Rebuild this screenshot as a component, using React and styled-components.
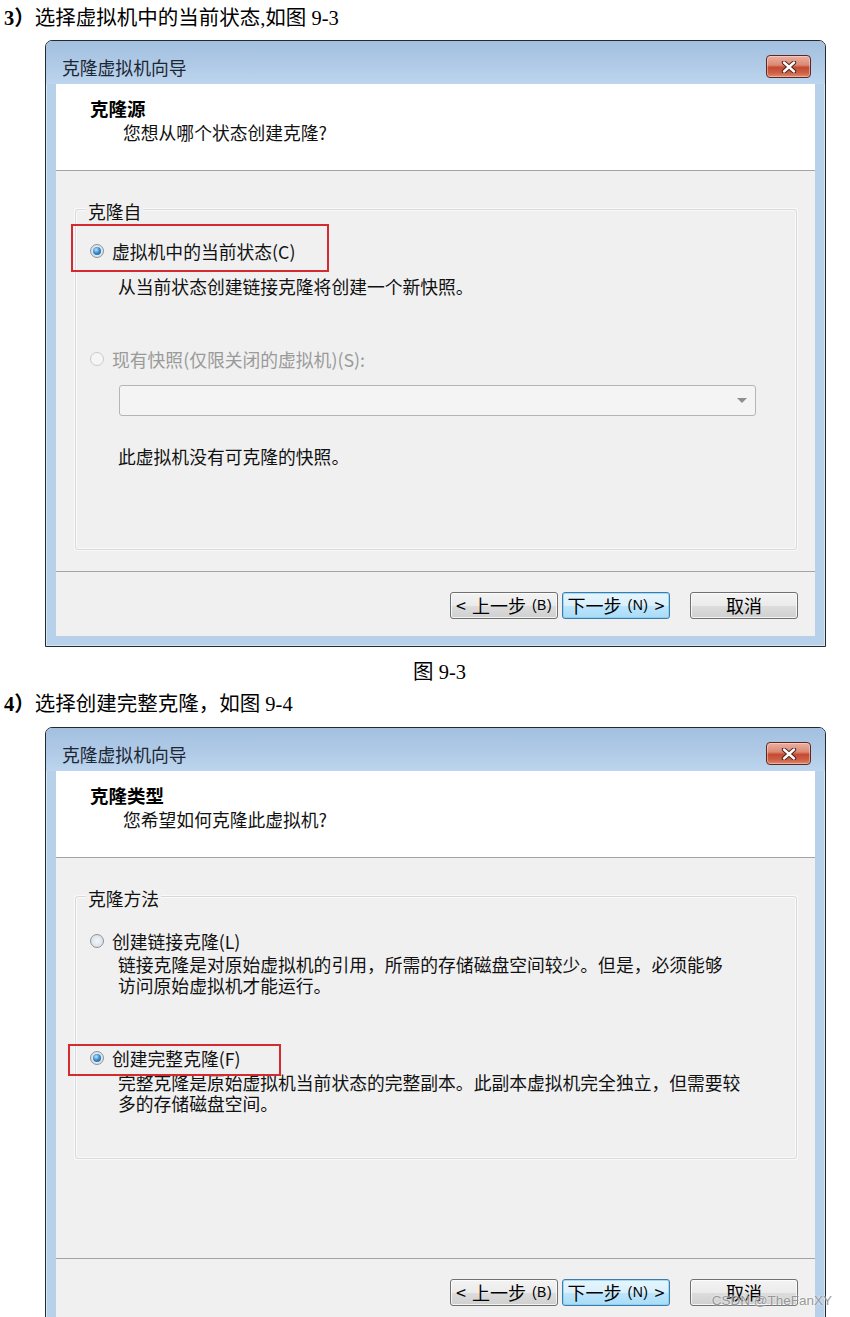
import React from "react";
import styled, { createGlobalStyle } from "styled-components";

const Global = createGlobalStyle`
  html, body { margin: 0; padding: 0; background: #fff; overflow: hidden; }
  body { font-family: "Liberation Serif", "Noto Sans CJK SC", serif; }
`;

const UI_FONT = `"Noto Sans CJK SC", "Noto Sans", sans-serif`;

const Page = styled.div`
  position: relative;
  width: 850px;
  height: 1317px;
  overflow: hidden;
  padding-top: 4px;
  box-sizing: border-box;
`;

const Caption = styled.p`
  margin: ${(p) => p.$mt || 0}px 0 0 4px;
  font-family: "Liberation Serif", "Noto Sans CJK SC", serif;
  font-size: 20.5px;
  line-height: 28px;
  color: #000;
  white-space: nowrap;
  b { font-weight: bold; }
`;

const FigCaption = styled.p`
  margin: 11px 0 0 0;
  padding-left: 29px;
  text-align: center;
  font-family: "Liberation Serif", "Noto Sans CJK SC", serif;
  font-size: 20.5px;
  line-height: 28px;
  color: #000;
`;

const Window = styled.div`
  margin: ${(p) => p.$mt}px 0 0 45px;
  width: 781px;
  height: 607px;
  flex: none;
  box-sizing: border-box;
  border: 1px solid #252a2f;
  border-radius: 7px 7px 0 0;
  background: #b7d1eb;
  display: flex;
  flex-direction: column;
  box-shadow: inset 0 0 0 1px rgba(255, 255, 255, 0.45);
`;

const TitleBar = styled.div`
  height: 43px;
  flex: none;
  display: flex;
  align-items: flex-start;
  justify-content: space-between;
  padding: 14px 14px 0 16px;
  box-sizing: border-box;
  border-radius: 6px 6px 0 0;
  background: linear-gradient(#a2c0e0 0%, #b1cbe7 60%, #bdd5ee 100%);
`;

const TitleText = styled.span`
  font-family: ${UI_FONT};
  font-size: 17.8px;
  line-height: 24px;
  color: #1b2733;
`;

const CloseButton = styled.div`
  width: 45px;
  height: 23px;
  box-sizing: border-box;
  border: 1px solid #5a2a22;
  border-radius: 4px;
  background: linear-gradient(#eab0a2 0%, #dd8a74 42%, #c44a31 55%, #cf5f45 80%, #dc8a70 100%);
  box-shadow: inset 0 0 0 1px rgba(255, 230, 220, 0.45);
  display: flex;
  align-items: center;
  justify-content: center;
`;

const Frame = styled.div`
  flex: 1;
  display: flex;
  padding: 0 10px 10px;
  min-height: 0;
`;

const Client = styled.div`
  flex: 1;
  display: flex;
  flex-direction: column;
  background: #f0f0f0;
  font-family: ${UI_FONT};
  font-size: 17.8px;
  line-height: 24px;
  color: #111;
`;

const Header = styled.div`
  flex: none;
  height: 87px;
  background: #fff;
  border-bottom: 1px solid #a3a3a3;
  padding-top: 12px;
  box-sizing: border-box;
`;

const HeaderTitle = styled.div`
  margin-left: 34px;
  font-weight: bold;
  font-size: 18.5px;
  line-height: 24px;
  color: #000;
`;

const HeaderSub = styled.div`
  margin-left: 67px;
  line-height: 24px;
`;

const Body = styled.div`
  flex: none;
  height: 401px;
  padding: 38px 18px 0 19px;
  box-sizing: border-box;
  border-bottom: 1px solid #a3a3a3;
`;

const Group = styled.div`
  position: relative;
  height: ${(p) => p.$height}px;
  box-sizing: border-box;
  border: 1px solid #d6d9dc;
  border-radius: 3px;
  box-shadow: inset 0 0 0 1px #fafafa, 0 0 0 1px #fafafa;
  display: flex;
  flex-direction: column;
`;

const GroupLabel = styled.span`
  position: absolute;
  top: -11px;
  left: 10px;
  padding: 0 2px;
  background: #f0f0f0;
  line-height: 24px;
`;

const Option = styled.div`
  position: relative;
  display: flex;
  align-items: center;
  gap: 8px;
  height: 22px;
  line-height: 22px;
  padding-left: 14px;
  margin-top: ${(p) => p.$mt}px;
  color: ${(p) => (p.$disabled ? "#9a9a9a" : "#111")};
`;

const Radio = styled.span`
  width: 14px;
  height: 14px;
  flex: none;
  border-radius: 50%;
  box-sizing: border-box;
  border: 1px solid ${(p) => (p.$disabled ? "#cacaca" : "#8c949c")};
  background: ${(p) =>
    p.$disabled
      ? "#f5f5f5"
      : "radial-gradient(circle at 50% 50%, #f4f7fa 0%, #dfe5ea 60%, #c3cbd3 100%)"};
  display: flex;
  align-items: center;
  justify-content: center;
  &::after {
    content: "";
    display: ${(p) => (p.$checked ? "block" : "none")};
    width: 8px;
    height: 8px;
    border-radius: 50%;
    background: radial-gradient(circle at 40% 35%, #bfe6ff 0%, #3a8fd0 45%, #134f8c 100%);
  }
`;

const RedBox = styled.span`
  position: absolute;
  top: ${(p) => p.$t}px;
  left: ${(p) => p.$l}px;
  width: ${(p) => p.$w}px;
  height: ${(p) => p.$h}px;
  box-sizing: border-box;
  border: 2px solid #d42b30;
  pointer-events: none;
`;

const Desc = styled.div`
  margin: ${(p) => p.$mt}px 0 0 42px;
  line-height: 21px;
  white-space: pre-line;
`;

const Combo = styled.div`
  margin: 15px 0 0 43px;
  width: 637px;
  height: 31px;
  flex: none;
  box-sizing: border-box;
  border: 1px solid #b5b5b5;
  border-radius: 3px;
  background: #f4f4f4;
  display: flex;
  align-items: center;
  justify-content: flex-end;
  padding-right: 8px;
`;

const ComboArrow = styled.span`
  width: 0;
  height: 0;
  border-left: 5px solid transparent;
  border-right: 5px solid transparent;
  border-top: 5px solid #8e8e8e;
`;

const Footer = styled.div`
  flex: 1;
  display: flex;
  justify-content: flex-end;
  align-items: flex-start;
  padding: 20px 17px 0 0;
`;

const Button = styled.div`
  width: 108px;
  height: 27px;
  margin-left: ${(p) => p.$ml || 0}px;
  box-sizing: border-box;
  border: 1px solid ${(p) => (p.$focus ? "#3d7bad" : "#707070")};
  border-radius: 3px;
  background: ${(p) =>
    p.$focus
      ? "linear-gradient(#e6f5fd 0%, #d9f0fc 50%, #bee6fd 51%, #a9dcf6 100%)"
      : "linear-gradient(#f3f3f3 0%, #ebebeb 50%, #dddddd 51%, #cfcfcf 100%)"};
  box-shadow: inset 0 0 0 1px ${(p) => (p.$focus ? "rgba(120,200,240,0.6)" : "rgba(255,255,255,0.75)")};
  display: flex;
  align-items: center;
  justify-content: center;
  gap: 6px;
  font-size: 18px;
  line-height: 25px;
  color: #000;
  white-space: nowrap;
`;

const Key = styled.span`
  font-size: 14px;
  font-family: "Liberation Sans", Arial, sans-serif;
  letter-spacing: 0.5px;
`;

const Watermark = styled.span`
  position: absolute;
  right: 18px;
  top: 1292px;
  font-family: "Liberation Sans", Arial, sans-serif;
  font-size: 13.5px;
  line-height: 18px;
  color: rgba(140, 140, 140, 0.9);
  text-shadow: 0 0 2px #fff;
`;

function CloseIcon() {
  return (
    <svg width="16" height="12" viewBox="0 0 16 12">
      <path d="M3 1.5 L13 10.5 M13 1.5 L3 10.5" stroke="#4a2019" strokeWidth="4.4" strokeLinecap="round" />
      <path d="M3 1.5 L13 10.5 M13 1.5 L3 10.5" stroke="#ffffff" strokeWidth="2.4" strokeLinecap="round" />
    </svg>
  );
}

function Wizard({ mt, title, subtitle, groupLabel, groupHeight, children }) {
  return (
    <Window $mt={mt}>
      <TitleBar>
        <TitleText>克隆虚拟机向导</TitleText>
        <CloseButton>
          <CloseIcon />
        </CloseButton>
      </TitleBar>
      <Frame>
        <Client>
          <Header>
            <HeaderTitle>{title}</HeaderTitle>
            <HeaderSub>{subtitle}</HeaderSub>
          </Header>
          <Body>
            <Group $height={groupHeight}>
              <GroupLabel>{groupLabel}</GroupLabel>
              {children}
            </Group>
          </Body>
          <Footer>
            <Button>
              <span>&lt;</span>
              <span>上一步</span>
              <Key>(B)</Key>
            </Button>
            <Button $focus $ml={4}>
              <span>下一步</span>
              <Key>(N)</Key>
              <span>&gt;</span>
            </Button>
            <Button $ml={20}>取消</Button>
          </Footer>
        </Client>
      </Frame>
    </Window>
  );
}

export default function App() {
  return (
    <Page>
      <Global />
      <Caption>
        <b>3）</b>选择虚拟机中的当前状态,如图 9-3
      </Caption>
      <Wizard
        mt={8}
        title="克隆源"
        subtitle="您想从哪个状态创建克隆?"
        groupLabel="克隆自"
        groupHeight={341}
      >
        <Option $mt={30}>
          <Radio $checked />
          <span>虚拟机中的当前状态(C)</span>
          <RedBox $t={-16} $l={-5} $w={258} $h={48} />
        </Option>
        <Desc $mt={14}>从当前状态创建链接克隆将创建一个新快照。</Desc>
        <Option $mt={51} $disabled>
          <Radio $disabled />
          <span>现有快照(仅限关闭的虚拟机)(S):</span>
        </Option>
        <Combo>
          <ComboArrow />
        </Combo>
        <Desc $mt={30}>此虚拟机没有可克隆的快照。</Desc>
      </Wizard>
      <FigCaption>图 9-3</FigCaption>
      <Caption $mt={4}>
        <b>4）</b>选择创建完整克隆，如图 9-4
      </Caption>
      <Wizard
        mt={9}
        title="克隆类型"
        subtitle="您希望如何克隆此虚拟机?"
        groupLabel="克隆方法"
        groupHeight={263}
      >
        <Option $mt={33}>
          <Radio />
          <span>创建链接克隆(L)</span>
        </Option>
        <Desc $mt={2}>{"链接克隆是对原始虚拟机的引用，所需的存储磁盘空间较少。但是，必须能够\n访问原始虚拟机才能运行。"}</Desc>
        <Option $mt={51}>
          <Radio $checked />
          <span>创建完整克隆(F)</span>
          <RedBox $t={-3} $l={-8} $w={213} $h={32} />
        </Option>
        <Desc $mt={3}>{"完整克隆是原始虚拟机当前状态的完整副本。此副本虚拟机完全独立，但需要较\n多的存储磁盘空间。"}</Desc>
      </Wizard>
      <Watermark>CSDN @TheFanXY</Watermark>
    </Page>
  );
}
